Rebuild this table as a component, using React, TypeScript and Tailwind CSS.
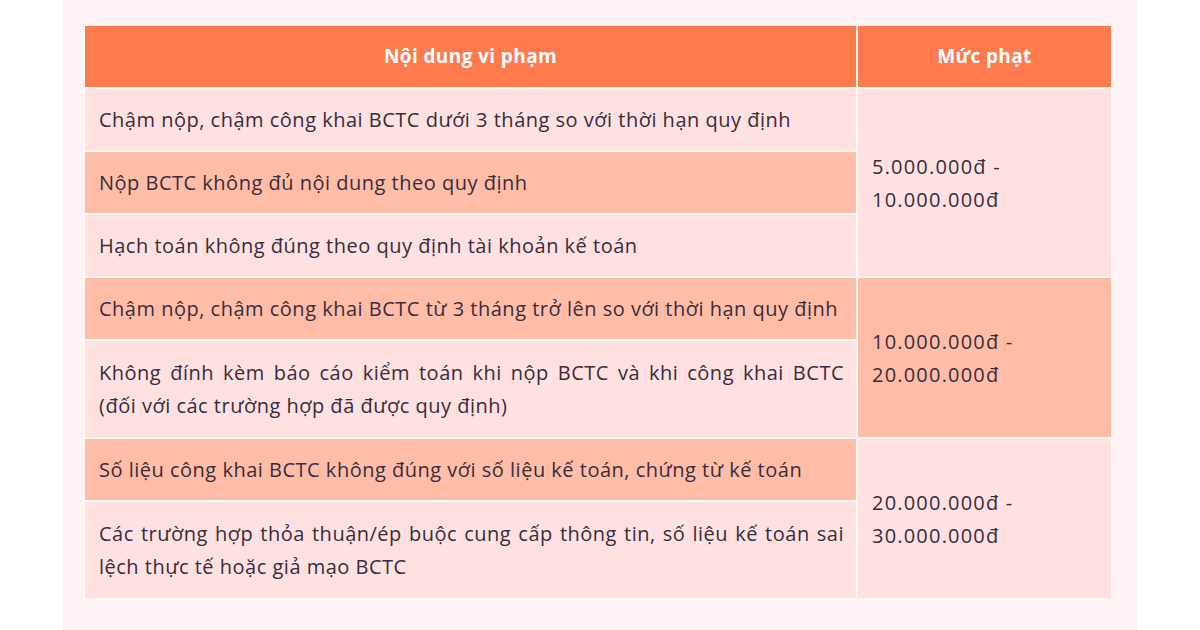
const light = 'bg-[#ffe1e1]';
const dark = 'bg-[#ffbda8]';

type Row = {
  lines: string[];
  tone: string;
  fine?: { value: string[]; span: number; tone: string };
};

const rows: Row[] = [
  {
    lines: ['Chậm nộp, chậm công khai BCTC dưới 3 tháng so với thời hạn quy định'],
    tone: light,
    fine: { value: ['5.000.000đ -', '10.000.000đ'], span: 3, tone: light },
  },
  { lines: ['Nộp BCTC không đủ nội dung theo quy định'], tone: dark },
  { lines: ['Hạch toán không đúng theo quy định tài khoản kế toán'], tone: light },
  {
    lines: ['Chậm nộp, chậm công khai BCTC từ 3 tháng trở lên so với thời hạn quy định'],
    tone: dark,
    fine: { value: ['10.000.000đ -', '20.000.000đ'], span: 2, tone: dark },
  },
  {
    lines: [
      'Không đính kèm báo cáo kiểm toán khi nộp BCTC và khi công khai BCTC',
      '(đối với các trường hợp đã được quy định)',
    ],
    tone: light,
  },
  {
    lines: ['Số liệu công khai BCTC không đúng với số liệu kế toán, chứng từ kế toán'],
    tone: dark,
    fine: { value: ['20.000.000đ -', '30.000.000đ'], span: 2, tone: light },
  },
  {
    lines: [
      'Các trường hợp thỏa thuận/ép buộc cung cấp thông tin, số liệu kế toán sai',
      'lệch thực tế hoặc giả mạo BCTC',
    ],
    tone: light,
  },
];

export default function App() {
  return (
    <div className="w-[1200px] h-[630px] bg-white flex justify-center overflow-hidden font-['Open_Sans','Noto_Sans',sans-serif]">
      <div className="w-[1074px] h-full bg-[#fff2f5] pt-[24px] pl-[20px]">
        <table className="w-[1030px] table-fixed border-collapse text-[20px] leading-[33px] tracking-[0.5px] text-[#3a2d3c]">
          <colgroup>
            <col className="w-[773px]" />
            <col />
          </colgroup>
          <thead>
            <tr>
              <th className="h-[63px] border-2 border-[#fff6f7] bg-[#ff7a4c] text-white font-bold text-[19px] tracking-[0.4px] text-center">
                Nội dung vi phạm
              </th>
              <th className="h-[63px] border-2 border-[#fff6f7] bg-[#ff7a4c] text-white font-bold text-[19px] tracking-[0.4px] text-center">
                Mức phạt
              </th>
            </tr>
          </thead>
          <tbody>
            {rows.map((row) => (
              <tr key={row.lines[0]}>
                <td
                  className={`border-2 border-[#fff6f7] pl-[14px] pr-[12px] ${row.lines.length > 1 ? 'py-[15px]' : 'py-[14px]'} ${row.tone}`}
                >
                  {row.lines.map((line, i) => (
                    <div
                      key={line}
                      className={
                        i < row.lines.length - 1
                          ? 'whitespace-nowrap text-justify [text-align-last:justify]'
                          : 'whitespace-nowrap'
                      }
                    >
                      {line}
                    </div>
                  ))}
                </td>
                {row.fine && (
                  <td
                    rowSpan={row.fine.span}
                    className={`border-2 border-[#fff6f7] px-[14px] align-middle tracking-[1.2px] ${row.fine.tone}`}
                  >
                    {row.fine.value.map((v) => (
                      <div key={v}>{v}</div>
                    ))}
                  </td>
                )}
              </tr>
            ))}
          </tbody>
        </table>
      </div>
    </div>
  );
}
